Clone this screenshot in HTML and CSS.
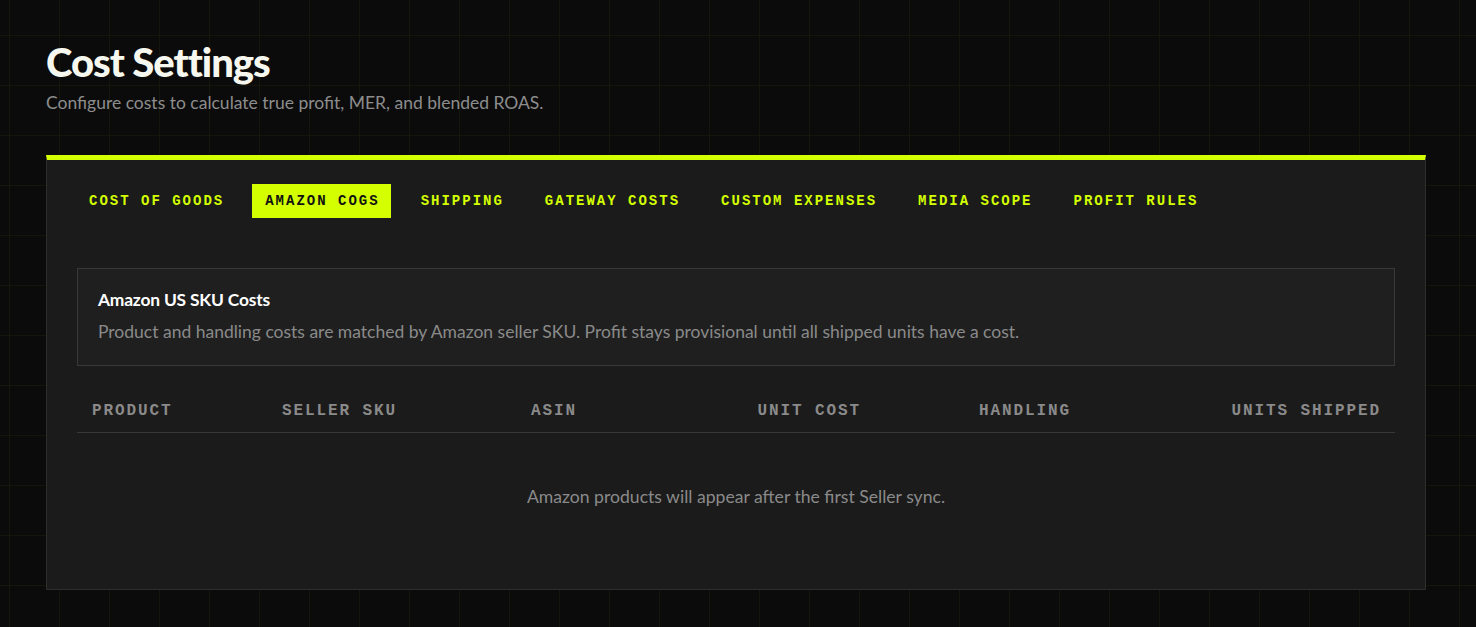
FILE: index.html
```html
<!DOCTYPE html>
<html lang="en">
<head>
<meta charset="utf-8">
<title>Cost Settings</title>
<link rel="stylesheet" href="styles.css">
</head>
<body>
<main class="page">
  <header class="page-head">
    <h1 class="page-title">Cost Settings</h1>
    <p class="page-sub">Configure costs to calculate true profit, MER, and blended ROAS.</p>
  </header>
  <section class="card">
    <nav class="tabs">
      <span class="tab">Cost of Goods</span>
      <span class="tab tab-active">Amazon COGS</span>
      <span class="tab">Shipping</span>
      <span class="tab">Gateway Costs</span>
      <span class="tab">Custom Expenses</span>
      <span class="tab">Media Scope</span>
      <span class="tab">Profit Rules</span>
    </nav>
    <div class="info-box">
      <h2 class="info-title">Amazon US SKU Costs</h2>
      <p class="info-text">Product and handling costs are matched by Amazon seller SKU. Profit stays provisional until all shipped units have a cost.</p>
    </div>
    <div class="table">
      <div class="thead">
        <span class="th">Product</span>
        <span class="th">Seller SKU</span>
        <span class="th">ASIN</span>
        <span class="th th-right">Unit Cost</span>
        <span class="th th-right">Handling</span>
        <span class="th th-right">Units Shipped</span>
      </div>
      <div class="empty">Amazon products will appear after the first Seller sync.</div>
    </div>
  </section>
</main>
</body>
</html>
```

FILE: styles.css
```css
* { box-sizing: border-box; }
html, body { margin: 0; padding: 0; }
body {
  background-color: #0b0b0b;
  background-image:
    linear-gradient(to right, rgba(212,255,0,0.045) 1px, transparent 1px),
    linear-gradient(to bottom, rgba(212,255,0,0.045) 1px, transparent 1px);
  background-size: 50px 50px;
  background-position: 9px 35px;
  min-height: 627px;
  font-family: Lato, "Noto Sans", sans-serif;
  color: #f5f7ee;
}
.page {
  padding: 38px 50px 0 46px;
}
.page-head { margin-bottom: 40px; }
.page-title {
  margin: 0;
  font-family: Lato, sans-serif;
  font-weight: 900;
  font-size: 40px;
  line-height: 48px;
  letter-spacing: -1px;
  color: #f6f8ef;
}
.page-sub {
  margin: 5px 0 0;
  font-size: 17.5px;
  line-height: 24px;
  color: #8d8d8d;
}
.card {
  background: #1b1b1b;
  border: 1px solid #2e2e2e;
  border-top: 5px solid #d4ff00;
  padding: 24px 30px 30px;
}
.tabs {
  display: flex;
  gap: 17px;
  margin-left: -1px;
}
.tab {
  font-family: "Liberation Mono", "DejaVu Sans Mono", monospace;
  font-weight: 700;
  font-size: 14px;
  line-height: 16px;
  letter-spacing: 2px;
  text-transform: uppercase;
  color: #d4ff00;
  padding: 9px 11px 9px 13px;
}
.tab-active {
  background: #d4ff00;
  color: #111;
}
.info-box {
  margin-top: 50px;
  background: #1f1f1f;
  border: 1px solid #393939;
  padding: 20px 20px 21px;
}
.info-title {
  margin: 0;
  font-size: 17.4px;
  line-height: 22px;
  font-weight: 700;
  color: #ffffff;
  letter-spacing: -0.2px;
}
.info-text {
  margin: 9px 0 0;
  font-size: 17.5px;
  line-height: 24px;
  color: #8a8a8a;
}
.table { margin-top: 24px; }
.thead {
  display: grid;
  grid-template-columns: 190px 249px 180px 179px 210px 1fr;
  border-bottom: 1px solid #393939;
}
.th {
  font-family: "Liberation Mono", "DejaVu Sans Mono", monospace;
  font-weight: 700;
  font-size: 16px;
  line-height: 42px;
  letter-spacing: 1.9px;
  text-transform: uppercase;
  color: #8a8a8a;
  padding: 0 15px;
}
.th-right { text-align: right; padding-right: 14px; }
.empty {
  text-align: center;
  font-size: 17.6px;
  line-height: 28px;
  color: #8a8a8a;
  padding: 50px 0 48px;
}
```
